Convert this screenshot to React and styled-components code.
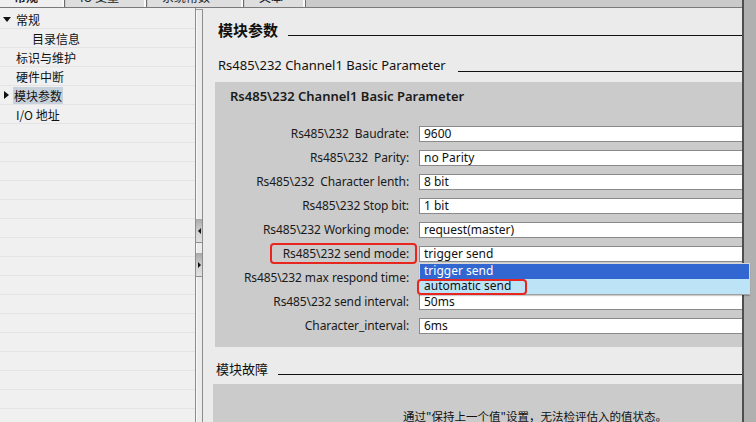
import React from 'react';
import styled, { createGlobalStyle } from 'styled-components';

const GlobalStyle = createGlobalStyle`
  html, body { margin: 0; padding: 0; overflow: hidden; background: #ebebeb; }
  * { box-sizing: border-box; }
`;

const CJK = `"Noto Sans CJK SC", "Noto Sans", sans-serif`;
const LATIN = `"Noto Sans", "Noto Sans CJK SC", sans-serif`;

const Frame = styled.div`
  width: 756px;
  height: 422px;
  display: flex;
  overflow: hidden;
  position: relative;
`;

const Workspace = styled.div`
  flex: 1;
  display: flex;
  flex-direction: column;
  min-width: 0;
`;

const TabBar = styled.div`
  height: 8px;
  background: #cacaca;
  border-bottom: 1px solid #7a7a7a;
  display: flex;
  overflow: hidden;
`;

const Tab = styled.div`
  width: ${p => p.$w}px;
  height: 8px;
  background: ${p => (p.$active ? '#efefef' : '#dedede')};
  border-right: 1px solid #6e6e6e;
  box-shadow: inset -2px 0 0 #fafafa;
  margin-right: 1px;
  overflow: hidden;
  font-family: ${CJK};
  font-size: 12px;
  font-weight: ${p => (p.$active ? 700 : 400)};
  color: #222;
  line-height: 14px;
  padding-left: ${p => p.$pad}px;
  white-space: nowrap;
`;

const TabText = styled.div`
  margin-top: -10px;
`;

const Body = styled.div`
  flex: 1;
  display: flex;
  min-height: 0;
`;

const Tree = styled.div`
  width: 196px;
  background: #f0f0f0;
  border-right: 1px solid #8c8c8c;
  padding-top: 2px;
  overflow: hidden;
`;

const TreeRow = styled.div`
  height: 19px;
  border-bottom: 1px solid #e4e4e4;
  display: flex;
  align-items: center;
  padding-left: ${p => p.$indent}px;
  font-family: ${CJK};
  font-size: 12px;
  color: #111;
  position: relative;
`;

const TreeLabel = styled.span`
  background: ${p => (p.$selected ? '#c7d1dc' : 'transparent')};
  padding: 0 1px;
  line-height: 17px;
  white-space: pre;
`;

const Caret = styled.span`
  position: absolute;
  left: ${p => (p.$open ? 3 : 4)}px;
  top: ${p => (p.$open ? 7 : 5)}px;
  width: 0;
  height: 0;
  ${p =>
    p.$open
      ? `border-left: 4px solid transparent; border-right: 4px solid transparent; border-top: 5px solid #111;`
      : `border-top: 4px solid transparent; border-bottom: 4px solid transparent; border-left: 5px solid #111;`}
`;

const Splitter = styled.div`
  width: 7px;
  margin-top: 1px;
  background: #ececec;
  border-top: 1px solid #9a9a9a;
  border-right: 1px solid #8c8c8c;
  box-shadow: inset 1px 0 0 #fafafa;
  display: flex;
  flex-direction: column;
  padding-top: 209px;
  gap: 10px;
`;

const SplitBtn = styled.div`
  height: 24px;
  background: linear-gradient(to bottom, #a9a9a9, #d4d4d4 60%, #e0e0e0);
  border-bottom: 1px solid #8f8f8f;
  display: flex;
  align-items: center;
  justify-content: center;
`;

const Arrow = styled.span`
  width: 0;
  height: 0;
  border-top: 3px solid transparent;
  border-bottom: 3px solid transparent;
  ${p => (p.$dir === 'left' ? 'border-right: 3px solid #111;' : 'border-left: 3px solid #111;')}
`;

const Main = styled.div`
  flex: 1;
  background: #ebebeb;
  padding-left: 12px;
  display: flex;
  flex-direction: column;
  min-width: 0;
`;

const SectionHead = styled.div`
  display: flex;
  align-items: center;
  height: 20px;
  flex: none;
  margin-top: ${p => p.$mt}px;
  padding-left: ${p => p.$pl}px;
  gap: ${p => p.$gap}px;
`;

const HeadText = styled.span`
  font-family: ${p => (p.$cjk ? CJK : LATIN)};
  font-size: ${p => p.$size}px;
  font-weight: ${p => (p.$bold ? 700 : 400)};
  color: #111;
  white-space: nowrap;
`;

const HeadRule = styled.div`
  flex: 1;
  height: 1px;
  background: #111;
  margin-top: ${p => p.$off || 11}px;
`;

const GroupBox = styled.div`
  background: #cbcbcb;
  margin-top: ${p => p.$mt}px;
  margin-left: ${p => p.$ml || 0}px;
  padding-top: ${p => p.$pt}px;
  padding-bottom: ${p => p.$pb || 0}px;
  flex: ${p => (p.$grow ? 1 : 'none')};
`;

const BoxTitle = styled.div`
  font-family: ${LATIN};
  font-size: 13px;
  font-weight: 600;
  color: #1a1a1a;
  line-height: 18px;
  padding-left: 15px;
`;

const Form = styled.div`
  margin-top: 21px;
  display: flex;
  flex-direction: column;
  gap: 8px;
`;

const FieldRow = styled.div`
  display: grid;
  grid-template-columns: 194px 1fr;
  column-gap: 10px;
  align-items: center;
  height: 16px;
`;

const Label = styled.div`
  text-align: right;
  font-family: ${LATIN};
  font-size: 12px;
  letter-spacing: -0.1px;
  color: #1a1a1a;
  white-space: pre;
  line-height: 16px;
`;

const Marked = styled.span`
  position: relative;
  display: inline-block;
  &::after {
    content: '';
    position: absolute;
    top: ${p => p.$t}px;
    bottom: ${p => p.$b}px;
    left: ${p => p.$l}px;
    right: ${p => p.$r}px;
    border: 2px solid #e8261f;
    border-radius: 4px;
    pointer-events: none;
  }
`;

const InputWrap = styled.div`
  position: relative;
  height: 16px;
`;

const Input = styled.div`
  height: 16px;
  background: #fff;
  border: 1px solid #8a8a8a;
  border-right: none;
  font-family: ${LATIN};
  font-size: 12px;
  color: #111;
  line-height: 14px;
  padding-left: 4px;
  white-space: nowrap;
`;

const Dropdown = styled.div`
  position: absolute;
  left: 0;
  top: 17px;
  width: 331px;
  z-index: 10;
  background: #fff;
  border: 1px solid #d8d8d8;
  border-bottom-color: #a0a0a0;
  box-shadow: 0 1px 1px rgba(0, 0, 0, 0.2);
`;

const Option = styled.div`
  height: 15px;
  line-height: 14px;
  padding-left: 4px;
  font-family: ${LATIN};
  font-size: 12px;
  background: ${p => (p.$active ? '#3266d1' : '#bde3f7')};
  color: ${p => (p.$active ? '#fff' : '#111')};
`;

const Note = styled.div`
  padding-left: 190px;
  font-family: ${CJK};
  font-size: 11.5px;
  color: #111;
  line-height: 16px;
  white-space: nowrap;
`;

const Scrollbar = styled.div`
  width: 14px;
  background: #b0b0b0;
  border-left: 2px solid #4e4e4e;
`;

const tabs = [
  { t: '常规', w: 65, pad: 14, active: true },
  { t: 'IO 变量', w: 81, pad: 14 },
  { t: '系统常数', w: 96, pad: 14 },
  { t: '文本', w: 61, pad: 14 },
];

const treeItems = [
  { t: '常规', indent: 15, open: true },
  { t: '目录信息', indent: 31 },
  { t: '标识与维护', indent: 15 },
  { t: '硬件中断', indent: 15 },
  { t: '模块参数', indent: 13, selected: true, closed: true },
  { t: 'I/O 地址', indent: 15 },
];

const fields = [
  { l: 'Rs485\\232  Baudrate:', v: '9600' },
  { l: 'Rs485\\232  Parity:', v: 'no Parity' },
  { l: 'Rs485\\232  Character lenth:', v: '8 bit' },
  { l: 'Rs485\\232 Stop bit:', v: '1 bit' },
  { l: 'Rs485\\232 Working mode:', v: 'request(master)' },
  { l: 'Rs485\\232 send mode:', v: 'trigger send', marked: true, open: true },
  { l: 'Rs485\\232 max respond time:', v: '' },
  { l: 'Rs485\\232 send interval:', v: '50ms' },
  { l: 'Character_interval:', v: '6ms' },
];

export default function App() {
  const blanks = Array.from({ length: 16 });
  return (
    <>
      <GlobalStyle />
      <Frame>
        <Workspace>
          <TabBar>
            {tabs.map(tb => (
              <Tab key={tb.t} $w={tb.w} $pad={tb.pad} $active={tb.active}>
                <TabText>{tb.t}</TabText>
              </Tab>
            ))}
          </TabBar>
          <Body>
            <Tree>
              {treeItems.map(it => (
                <TreeRow key={it.t} $indent={it.indent}>
                  {it.open && <Caret $open />}
                  {it.closed && <Caret />}
                  <TreeLabel $selected={it.selected}>{it.t}</TreeLabel>
                </TreeRow>
              ))}
              {blanks.map((_, i) => (
                <TreeRow key={i} $indent={15} />
              ))}
            </Tree>
            <Splitter>
              <SplitBtn>
                <Arrow $dir="left" />
              </SplitBtn>
              <SplitBtn>
                <Arrow $dir="right" />
              </SplitBtn>
            </Splitter>
            <Main>
              <SectionHead $mt={11} $pl={3} $gap={10}>
                <HeadText $cjk $bold $size={15}>模块参数</HeadText>
                <HeadRule $off={12} />
              </SectionHead>
              <SectionHead $mt={16} $pl={3} $gap={12}>
                <HeadText $size={13}>Rs485\232 Channel1 Basic Parameter</HeadText>
                <HeadRule $off={12} />
              </SectionHead>
              <GroupBox $mt={7} $pt={5} $pb={13}>
                <BoxTitle>Rs485\232 Channel1 Basic Parameter</BoxTitle>
                <Form>
                  {fields.map(f => (
                    <FieldRow key={f.l}>
                      <Label>
                        {f.marked ? (
                          <Marked $t={-3} $b={-2} $l={-13} $r={-8}>
                            {f.l}
                          </Marked>
                        ) : (
                          f.l
                        )}
                      </Label>
                      <InputWrap>
                        <Input>{f.v}</Input>
                        {f.open && (
                          <Dropdown>
                            <Option $active>trigger send</Option>
                            <Option>
                              <Marked $t={0} $b={-2} $l={-7} $r={-16}>
                                automatic send
                              </Marked>
                            </Option>
                          </Dropdown>
                        )}
                      </InputWrap>
                    </FieldRow>
                  ))}
                </Form>
              </GroupBox>
              <SectionHead $mt={11} $pl={1} $gap={10}>
                <HeadText $cjk $size={13}>模块故障</HeadText>
                <HeadRule $off={12} />
              </SectionHead>
              <GroupBox $mt={6} $ml={-2} $pt={24} $grow>
                <Note>通过"保持上一个值"设置，无法检评估入的值状态。</Note>
              </GroupBox>
            </Main>
          </Body>
        </Workspace>
        <Scrollbar />
      </Frame>
    </>
  );
}
